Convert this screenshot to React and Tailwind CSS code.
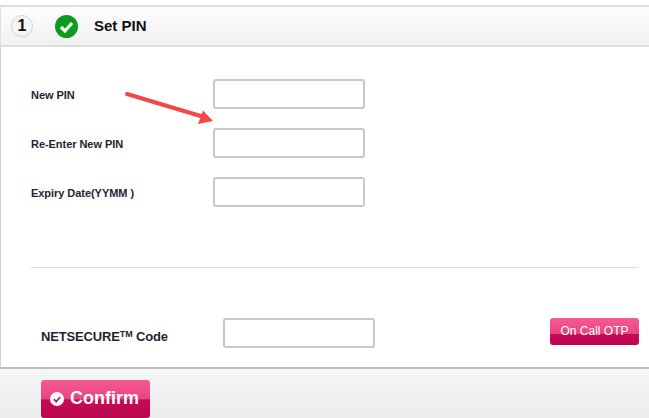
import { useState } from "react";

const fields = ["New PIN", "Re-Enter New PIN", "Expiry Date(YYMM )"];

function PinRow({ label }) {
  return (
    <div className="flex h-[30px] items-center">
      <label className="mt-[2px] w-[182px] text-[11px] font-bold tracking-[-0.05px] text-[#1f2530]">{label}</label>
      <input className="h-[30px] w-[152px] rounded-[3px] border-2 border-[#c8c8c8] bg-white" />
    </div>
  );
}

function Arrow() {
  return (
    <svg className="absolute left-[120px] top-[85px]" width="100" height="45" viewBox="0 0 100 45">
      <path d="M7 9 L84 32" stroke="#f4474a" strokeWidth="4" strokeLinecap="round" fill="none" />
      <path d="M93 36 L78 39 L83 25.5 Z" fill="#f4474a" />
    </svg>
  );
}

export default function App() {
  const [code, setCode] = useState("");

  return (
    <div className="relative flex h-[418px] w-[649px] flex-col overflow-hidden bg-white font-['Liberation_Sans',Arial,sans-serif]">
      <div className="h-[5px] bg-white" />
      <div className="flex h-[42px] items-center border-y-2 border-l border-[#dedede] bg-gradient-to-b from-[#fdfdfd] to-[#f1f1f1] pl-[10px]">
        <div className="flex h-[22px] w-[22px] items-center justify-center rounded-full border border-[#d4d4d4] bg-[#f5f5f5] text-[16px] font-bold text-[#111]">
          1
        </div>
        <svg className="ml-[22px]" width="23" height="23" viewBox="0 0 23 23">
          <circle cx="11.5" cy="11.5" r="11.5" fill="#0c9a1f" />
          <path d="M6 12 L10 16 L17 8" stroke="#fff" strokeWidth="3.2" fill="none" />
        </svg>
        <span className="ml-[16px] text-[15px] font-bold text-[#111]">Set PIN</span>
      </div>

      <div className="flex flex-1 flex-col border-l border-[#d0d0d0] pl-[30px] pr-[10px]">
        <div className="mt-[32px] flex flex-col gap-[19px]">
          {fields.map((f) => (
            <PinRow key={f} label={f} />
          ))}
        </div>
        <div className="mt-[60px] h-px bg-[#dcdcdc]" />
        <div className="mt-[50px] flex items-start pl-[10px]">
          <label className="mt-[9px] w-[182px] text-[13px] font-bold leading-[20px] tracking-[-0.15px] text-[#1f2530]">
            NETSECURE<sup className="text-[9px]">TM</sup> Code
          </label>
          <input
            value={code}
            onChange={(e) => setCode(e.target.value)}
            className="h-[30px] w-[152px] rounded-[3px] border-2 border-[#c8c8c8] bg-white"
          />
          <button className="ml-auto h-[27px] w-[89px] rounded-[3px] bg-[linear-gradient(#f65b92_0%,#e8447f_58%,#c80a53_60%,#b80850_100%)] pb-[1px] text-[12px] text-white">
            On Call OTP
          </button>
        </div>
      </div>

      <div className="h-[51px] shrink-0 border-t-2 border-[#bfbfbf] bg-gradient-to-b from-[#f6f6f6] to-[#ececec] pl-[41px] pt-[11px]">
        <button className="flex h-[38px] w-[109px] items-center justify-center gap-[6px] rounded-[3px] bg-[linear-gradient(#f65b92_0%,#e8447f_50%,#c80a53_52%,#b80850_100%)] pb-[2px] pr-[2px] text-[18px] font-bold text-white">
          <svg width="14" height="14" viewBox="0 0 14 14" className="mt-[2px]">
            <circle cx="7" cy="7" r="7" fill="#fff" />
            <path d="M3.8 7.2 L6.2 9.6 L10.2 5" stroke="#c9185f" strokeWidth="1.8" fill="none" />
          </svg>
          Confirm
        </button>
      </div>

      <Arrow />
    </div>
  );
}
